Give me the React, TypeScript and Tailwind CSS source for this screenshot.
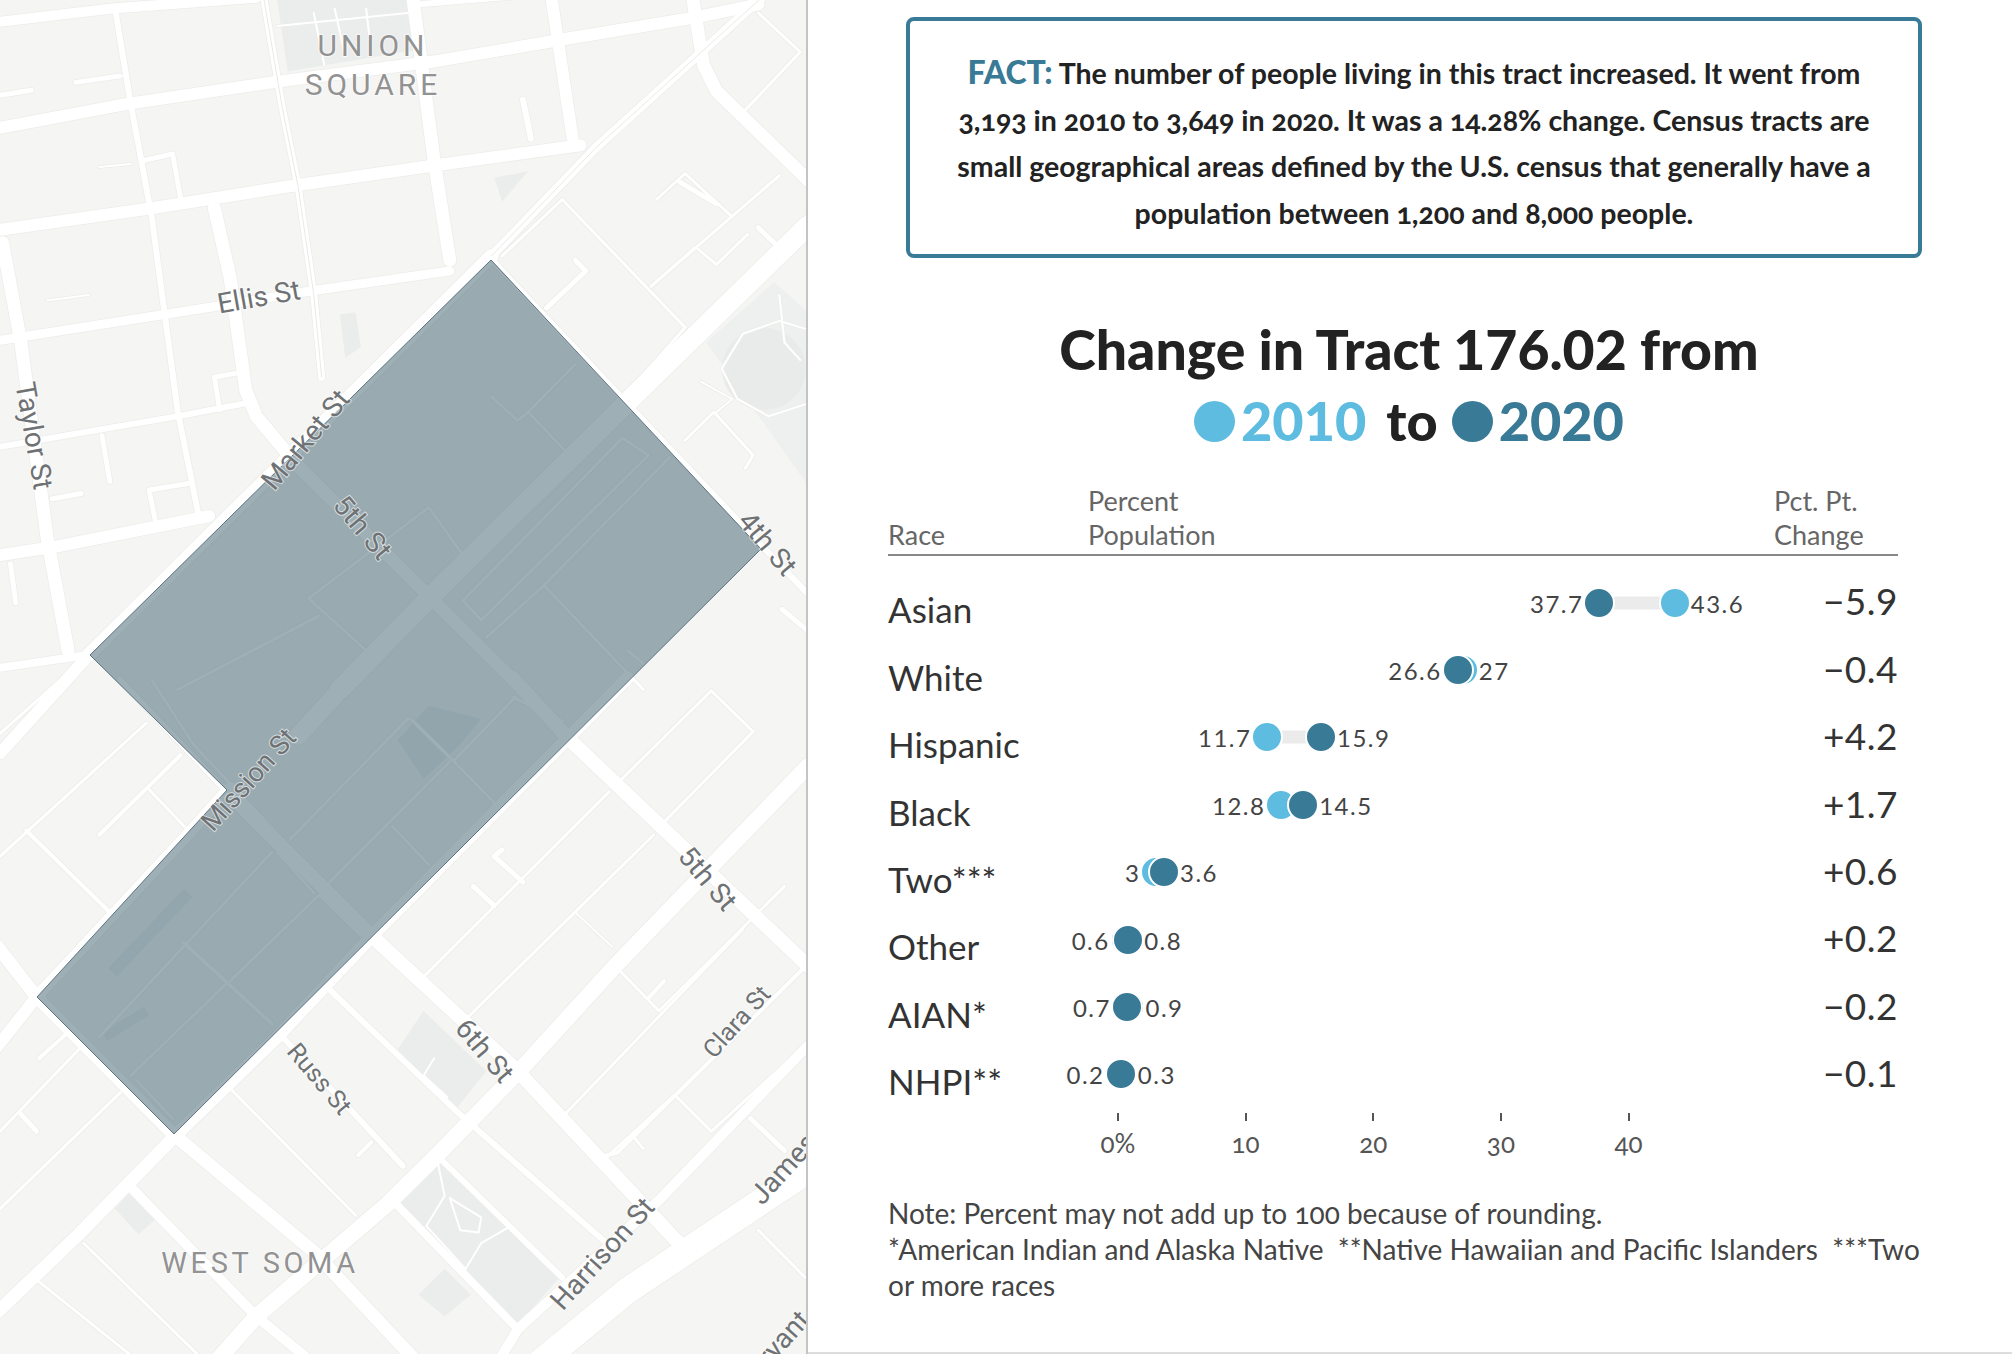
const ax = (x: number) => x / 1.912;
const ay = (y: number) => y / 2.306;
const by = (y: number) => 680 + y / 2.326;

type Road = [number, number[]];

// traced from the top half of the map
const topRoads: Road[] = [
  [10, [0, 50, 210, 20, 490, -5]],
  [6, [800, 10, 1000, -10]],
  [12, [0, 295, 240, 240, 520, 190, 840, 140, 1080, 90, 1330, 40, 1450, 10]],
  [12, [0, 530, 290, 480, 550, 430, 840, 380, 1110, 335]],
  [9, [0, 785, 420, 705, 600, 670, 860, 625]],
  [6, [0, 1030, 340, 960, 470, 930]],
  [12, [0, 1280, 110, 1260, 400, 1190]],
  [8, [0, 1540, 170, 1510]],
  [6, [220, 20, 250, 240, 290, 500, 340, 950, 380, 1190]],
  [13, [5, 560, 40, 790, 90, 1240, 130, 1500]],
  [13, [410, 480, 440, 640, 470, 900, 490, 960, 570, 1075, 1000, 1590]],
  [7, [505, 0, 540, 250, 570, 430, 600, 680, 615, 870]],
  [13, [790, 0, 830, 370, 860, 600]],
  [12, [1055, 0, 1095, 320]],
  [13, [1325, 0, 1345, 150, 1370, 210, 1545, 415]],
  [9, [1460, -10, 1140, 340, 940, 590]],
  [14, [940, 590, 170, 1510]],
  [20, [1545, 520, 1210, 915, 820, 1380, 650, 1590]],
  [6, [945, 605, 1450, 1250, 1545, 1370]],
  [3, [1075, 460, 1310, 755]],
  [3, [1245, 660, 1490, 405]],
  [3, [1450, 30, 1530, 120, 1420, 260]],
  [3, [1255, 460, 1310, 400, 1400, 500]],
  [5, [1300, 420, 1370, 470]],
  [3, [1245, 660, 1330, 570, 1370, 610, 1430, 540]],
  [5, [1450, 525, 1480, 560]],
  [5, [1100, 600, 1120, 625, 1045, 710]],
  [3, [960, 590, 1075, 460]],
  [3, [1310, 1015, 1365, 950, 1440, 1050, 1425, 1080]],
  [3, [1200, 905, 1310, 755]],
  [5, [1495, 1405, 1545, 1455]],
  [5, [145, 190, 230, 175]],
  [5, [0, 220, 60, 208]],
  [2, [190, 385, 250, 378]],
  [2, [90, 693, 170, 680]],
  [6, [1000, 230, 1015, 320]],
  [5, [275, 370, 330, 355, 345, 455]],
  [5, [455, 860, 410, 870, 420, 945]],
  [5, [195, 1005, 210, 1110]],
  [5, [100, 1150, 155, 1138]],
  [5, [360, 1115, 285, 1130, 297, 1200]],
  [5, [20, 1300, 30, 1390]],
  [3, [1010, 950, 1100, 840]],
  [3, [1010, 950, 1085, 1045]],
  [3, [940, 915, 990, 970, 1010, 950]],
  [3, [885, 1280, 820, 1170, 590, 1380, 700, 1500]],
  [3, [610, 1420, 340, 1590]],
  [3, [1190, 1010, 1240, 1050, 920, 1430, 885, 1385, 1190, 1010]],
  [3, [1280, 1055, 1040, 1350, 1230, 1590]],
  [3, [930, 1470, 1040, 1350]],
  [3, [900, 1290, 1090, 1050]],
  [3, [1200, 1500, 1230, 1530]],
  [2, [530, 60, 780, 30]],
  [2, [600, 30, 620, 150]],
  [2, [640, 20, 660, 130]],
  [2, [700, 20, 710, 120]],
  [2, [1380, 850, 1420, 770, 1490, 740, 1545, 760]],
  [2, [1380, 850, 1410, 920, 1470, 960, 1545, 930]],
  [2, [1490, 680, 1500, 790, 1530, 830]],
  [2, [1340, 880, 1400, 920, 1370, 950]],
];

// traced from the bottom half of the map
const bottomRoads: Road[] = [
  [13, [1200, -5, 715, 590, 530, 830, 335, 1060, 150, 1290, -5, 1470]],
  [12, [-10, 860, 70, 737, 370, 345, 440, 250]],
  [12, [170, -58, 0, 170]],
  [3, [120, -5, -5, 130]],
  [13, [-5, 620, 70, 737, 330, 1055, 600, 1330, 800, 1590]],
  [6, [230, 0, 430, 255]],
  [14, [980, -5, 1090, 140, 1545, 665]],
  [18, [660, 10, 570, 130]],
  [16, [1545, 200, 1180, 660, 1000, 900, 840, 1100, 740, 1220, 490, 1480, 410, 1590]],
  [10, [1545, 850, 1260, 1210, 990, 1510, 950, 1590]],
  [26, [1545, 1140, 1200, 1420, 1030, 1590]],
  [14, [450, 280, 715, 600, 990, 910, 1290, 1300, 1320, 1330]],
  [6, [540, 830, 770, 1130]],
  [4, [710, 1075, 685, 1105]],
  [6, [630, 720, 870, 1000, 1160, 1310]],
  [3, [440, 950, 680, 1245]],
  [10, [250, 1180, 490, 1480, 600, 1590]],
  [3, [160, 1310, 480, 1690]],
  [3, [75, 1400, 270, 1590]],
  [3, [1165, 260, 810, 690]],
  [3, [1250, 360, 890, 790]],
  [3, [1360, 25, 1185, 235]],
  [3, [1440, 120, 1270, 330]],
  [3, [1440, 120, 1360, 25]],
  [5, [960, 395, 945, 410, 1000, 470]],
  [5, [905, 480, 945, 525]],
  [4, [1545, 660, 1180, 1100, 1145, 1110]],
  [3, [1420, 580, 1080, 1010]],
  [3, [1180, 670, 1260, 770, 1500, 480]],
  [4, [1240, 740, 1270, 700]],
  [3, [1160, 1110, 1290, 965, 1360, 1050, 1540, 850]],
  [5, [1435, 1020, 1500, 1095]],
  [3, [1450, 1280, 1540, 1390]],
  [3, [1210, 1060, 1230, 1090]],
  [6, [835, 1105, 1075, 1390]],
  [8, [750, 1210, 990, 1510]],
  [3, [0, 410, 280, 100]],
  [4, [50, 350, 210, 540]],
  [4, [190, 360, 345, 175]],
  [3, [285, 255, 360, 350]],
  [3, [0, 1230, 230, 960]],
  [3, [0, 1050, 150, 860]],
  [5, [40, 1010, 70, 1050]],
  [4, [75, 880, 125, 825]],
  [3, [370, 150, 540, 370]],
  [3, [290, 0, 370, 150]],
  [3, [555, 370, 780, 90]],
  [3, [630, 470, 860, 190]],
  [3, [750, 340, 820, 430]],
  [3, [190, 830, 520, 400]],
  [4, [350, 610, 520, 800]],
  [3, [250, 920, 430, 710]],
  [3, [440, 700, 610, 500, 690, 595]],
  [3, [530, 400, 600, 495]],
  [3, [260, 930, 330, 1020]],
  [3, [785, 90, 860, 180, 945, 285]],
  [3, [870, 185, 985, 40]],
  [3, [1075, 95, 980, 40]],
  [2, [1100, 540, 1170, 620]],
  [2, [830, 880, 810, 920, 855, 970]],
  [2, [835, 1110, 850, 1200, 815, 1270, 890, 1370]],
  [2, [970, 1275, 920, 1310, 890, 1370]],
  [2, [860, 1205, 920, 1250, 915, 1285, 880, 1280, 860, 1205]],
];

const toPath = (pts: number[], fy: (y: number) => number) => {
  let d = "";
  for (let i = 0; i < pts.length; i += 2) {
    d += `${i === 0 ? "M" : "L"}${ax(pts[i]).toFixed(1)} ${fy(pts[i + 1]).toFixed(1)} `;
  }
  return d;
};

const poly = (pts: number[], fy: (y: number) => number) => toPath(pts, fy) + "Z";

const labels: [string, number, number, number, number][] = [
  ["Ellis St", 259, 299, -10, 28],
  ["Taylor St", 32, 436, 80, 28],
  ["Market St", 307, 441, -50, 28],
  ["5th St", 361, 529, 50, 28],
  ["4th St", 766, 545, 50, 28],
  ["Mission St", 250, 781, -48, 27],
  ["5th St", 706, 880, 50, 28],
  ["6th St", 483, 1052, 50, 28],
  ["Russ St", 318, 1080, 50, 25],
  ["Clara St", 738, 1023, -48, 25],
  ["Harrison St", 604, 1255, -48, 28],
  ["James", 785, 1170, -48, 28],
  ["Bryant", 779, 1346, -48, 28],
];

const MapPanel = () => {
  return (
    <div className="w-[808px] h-full shrink-0 border-r-2 border-[#c4c4c4] bg-[#f5f5f3] overflow-hidden">
      <svg width="806" height="1354" viewBox="0 0 806 1354" className="block">
        <path d={poly([530, 0, 780, 0, 795, 115, 550, 165], ay)} fill="#ebedec" />
        <path d={poly([945, 410, 1010, 395, 960, 465], ay)} fill="#ebedec" />
        <path d={poly([650, 725, 680, 720, 690, 800, 660, 825], ay)} fill="#ebedec" />
        <path d={poly([1350, 790, 1480, 650, 1545, 720, 1545, 1120, 1480, 1010], ay)} fill="#eef0ef" />
        <ellipse cx={764} cy={369} rx={42} ry={41} fill="#e9ebea" />
        <path d={poly([220, 1230, 250, 1190, 300, 1250, 265, 1290], by)} fill="#ebedec" />
        <path d={poly([760, 860, 810, 770, 930, 910, 870, 1000], by)} fill="#ebedec" />
        <path d={poly([760, 1210, 840, 1110, 1070, 1390, 990, 1500], by)} fill="#ebedec" />
        <path d={poly([800, 1430, 850, 1370, 900, 1430, 850, 1480], by)} fill="#ebedec" />
        <path d={toPath([215, 680, 360, 495], by)} stroke="#ebedec" strokeWidth={12} fill="none" />
        <path d={toPath([200, 830, 280, 770], by)} stroke="#ebedec" strokeWidth={10} fill="none" />
        <path d={poly([760, 140, 820, 60, 920, 90, 880, 150, 810, 230], by)} fill="#e9ebea" />
        <g fill="none" stroke="#ececea" strokeLinejoin="round" strokeLinecap="round">
          {topRoads.map(([w, pts], i) => (
            <path key={i} d={toPath(pts, ay)} strokeWidth={w + 1.5} />
          ))}
          {bottomRoads.map(([w, pts], i) => (
            <path key={i} d={toPath(pts, by)} strokeWidth={w + 1.5} />
          ))}
        </g>
        <g fill="none" stroke="#ffffff" strokeLinejoin="round" strokeLinecap="round">
          {topRoads.map(([w, pts], i) => (
            <path key={i} d={toPath(pts, ay)} strokeWidth={w} />
          ))}
          {bottomRoads.map(([w, pts], i) => (
            <path key={i} d={toPath(pts, by)} strokeWidth={w} />
          ))}
        </g>
        <path d={toPath([505, 0, 540, 250, 570, 430, 600, 680, 615, 870], ay)} stroke="#e9e9e7" strokeWidth={1} fill="none" />
        <path d={toPath([1460, -10, 1140, 340, 940, 590], ay)} stroke="#e9e9e7" strokeWidth={1} fill="none" />
        <path
          d="M491 260 L761 549 L174 1134 L37 997 L227 790 L90 655 Z"
          fill="#3d5f6d"
          fillOpacity={0.5}
          stroke="#5d7480"
          strokeWidth={1}
        />
        <g
          fontFamily="Roboto, sans-serif"
          fill="#6f7274"
          stroke="#ffffff"
          strokeWidth={2}
          strokeOpacity={0.6}
          style={{ paintOrder: "stroke" }}
          textAnchor="middle"
          dominantBaseline="middle"
        >
          {labels.map(([text, x, y, r, size], i) => (
            <text key={i} transform={`translate(${x} ${y}) rotate(${r})`} fontSize={size}>
              {text}
            </text>
          ))}
          <g fill="#929292" fontSize={30} letterSpacing={4}>
            <text x={373} y={48}>UNION</text>
            <text x={373} y={87}>SQUARE</text>
            <text x={260} y={1265} fontSize={29} letterSpacing={3.6}>WEST SOMA</text>
          </g>
        </g>
      </svg>
    </div>
  );
};

interface Row {
  race: string;
  from: number;
  to: number;
  change: string;
}

const rows: Row[] = [
  { race: "Asian", from: 43.6, to: 37.7, change: "−5.9" },
  { race: "White", from: 27, to: 26.6, change: "−0.4" },
  { race: "Hispanic", from: 11.7, to: 15.9, change: "+4.2" },
  { race: "Black", from: 12.8, to: 14.5, change: "+1.7" },
  { race: "Two***", from: 3, to: 3.6, change: "+0.6" },
  { race: "Other", from: 0.6, to: 0.8, change: "+0.2" },
  { race: "AIAN*", from: 0.9, to: 0.7, change: "−0.2" },
  { race: "NHPI**", from: 0.3, to: 0.2, change: "−0.1" },
];

const pxPerPoint = 12.77;
const zeroX = 30;

const ChartRow = ({ row }: { row: Row }) => {
  const low = Math.min(row.from, row.to);
  const high = Math.max(row.from, row.to);
  const x = (v: number) => zeroX + v * pxPerPoint;
  return (
    <div className="flex items-center h-[67.4px]">
      <div className="w-[200px] mt-[14px] text-[35px] text-[#333]">{row.race}</div>
      <div className="relative flex-1 h-full">
        <div
          className="absolute top-1/2 -translate-y-1/2 h-[13px] bg-[#ebebeb]"
          style={{ left: x(low), width: x(high) - x(low) }}
        />
        <div
          className="absolute top-1/2 -translate-x-1/2 -translate-y-1/2 w-[32px] h-[32px] rounded-full bg-[#5dbcdf] border-2 border-white"
          style={{ left: x(row.from) }}
        />
        <div
          className="absolute top-1/2 -translate-x-1/2 -translate-y-1/2 w-[32px] h-[32px] rounded-full bg-[#397a96] border-2 border-white"
          style={{ left: x(row.to) }}
        />
        <span
          className="absolute top-1/2 -translate-x-full -translate-y-1/2 mt-[1px] text-[24px] tracking-[1.5px] text-[#444]"
          style={{ left: x(low) - 16 }}
        >
          {low}
        </span>
        <span
          className="absolute top-1/2 -translate-y-1/2 mt-[1px] text-[24px] tracking-[1.5px] text-[#444]"
          style={{ left: x(high) + 16 }}
        >
          {high}
        </span>
      </div>
      <div className="mb-[3px] text-[37px] text-[#333] tracking-[0.5px]">{row.change}</div>
    </div>
  );
};

const App = () => {
  return (
    <div className="flex w-[2012px] h-[1354px] bg-white overflow-hidden font-['Lato',sans-serif]">
      <MapPanel />
      <div className="flex-1 h-full border-b-2 border-[#ddd]">
        <div className="ml-[98px] mt-[17px] w-[1016px] h-[241px] border-4 border-[#397a96] rounded-lg flex items-center justify-center">
          <p className="w-[945px] pt-[10px] text-center text-[28.5px] leading-[46.5px] font-bold text-[#222] oldstyle-nums">
            <span className="text-[#397a96] font-black text-[32px]">FACT:</span> The number of people living in this
            tract increased. It went from 3,193 in 2010 to 3,649 in 2020. It was a 14.28% change. Census tracts are
            small geographical areas defined by the U.S. census that generally have a population between 1,200 and
            8,000 people.
          </p>
        </div>
        <div className="mt-[55px] text-center leading-[72px] font-black text-[#222] ml-[-2px]">
          <div className="text-[55.3px]">Change in Tract 176.02 from</div>
          <div className="flex items-center justify-center text-[54px]">
            <span className="w-[41px] h-[41px] rounded-full bg-[#5dbcdf]" />
            <span className="ml-[6px] text-[#5dbcdf]">2010</span>
            <span className="ml-[20px]">to</span>
            <span className="ml-[14px] w-[41px] h-[41px] rounded-full bg-[#397a96]" />
            <span className="ml-[6px] text-[#397a96]">2020</span>
          </div>
        </div>
        <div className="ml-[80px] mt-[27px] w-[1010px]">
          <div className="flex items-end border-b-2 border-[#888] text-[27px] leading-[34px] text-[#666] pb-[2px]">
            <div className="w-[200px]">Race</div>
            <div className="flex-1">
              Percent
              <br />
              Population
            </div>
            <div className="w-[124px]">
              Pct. Pt.
              <br />
              Change
            </div>
          </div>
          <div className="mt-[13px]">
            {rows.map((row) => (
              <ChartRow key={row.race} row={row} />
            ))}
          </div>
          <div className="flex mt-[5px] pl-[200px]">
            {[0, 10, 20, 30, 40].map((tick) => (
              <div key={tick} className="relative w-[127.7px] h-[50px] ml-0 first:ml-[-34px] flex flex-col items-center">
                <div className="w-[2px] h-[13px] bg-[#555]" />
                <div className="mt-[3px] text-[26px] text-[#555] oldstyle-nums">{tick === 0 ? "0%" : tick}</div>
              </div>
            ))}
          </div>
        </div>
        <p className="ml-[80px] mt-[32px] w-[1040px] text-[28px] leading-[36px] text-[#444] oldstyle-nums">
          Note: Percent may not add up to 100 because of rounding.
          <br />
          *American Indian and Alaska Native&nbsp; **Native Hawaiian and Pacific Islanders&nbsp; ***Two or more races
        </p>
      </div>
    </div>
  );
};

export default App;
